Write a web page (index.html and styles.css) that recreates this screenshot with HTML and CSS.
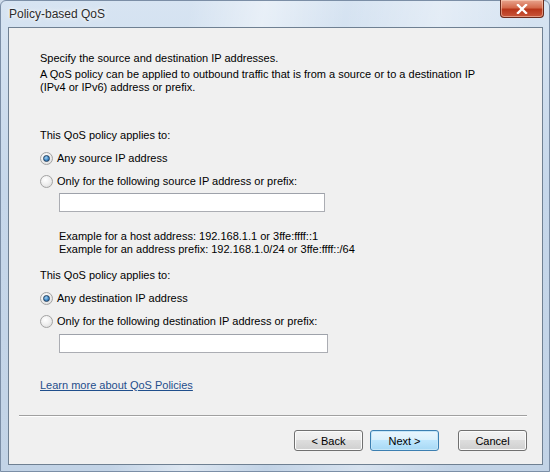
FILE: index.html
```html
<!DOCTYPE html>
<html>
<head>
<meta charset="utf-8">
<title>Policy-based QoS</title>
<link rel="stylesheet" href="styles.css">
</head>
<body>
<div class="window">
  <div class="titlebar">
    <span class="title">Policy-based QoS</span>
    <button class="close" aria-label="Close">
      <svg width="12" height="10" viewBox="0 0 12 10"><path d="M2 1 L10 9 M10 1 L2 9" stroke="#fff" stroke-width="2.4" stroke-linecap="square"/></svg>
    </button>
  </div>
  <div class="client">
    <div class="content">
      <p class="line">Specify the source and destination IP addresses.</p>
      <p class="line gap3">A QoS policy can be applied to outbound traffic that is from a source or to a destination IP<br>(IPv4 or IPv6) address or prefix.</p>

      <p class="line heading first">This QoS policy applies to:</p>
      <label class="radio checked r1"><span class="dot"></span>Any source IP address</label>
      <label class="radio r2"><span class="dot"></span>Only for the following source IP address or prefix:</label>
      <div class="textbox tb1"></div>

      <p class="line example">Example for a host address: 192.168.1.1 or 3ffe:ffff::1<br>Example for an address prefix: 192.168.1.0/24 or 3ffe:ffff::/64</p>

      <p class="line heading second">This QoS policy applies to:</p>
      <label class="radio checked r1"><span class="dot"></span>Any destination IP address</label>
      <label class="radio r2"><span class="dot"></span>Only for the following destination IP address or prefix:</label>
      <div class="textbox tb2"></div>

      <a class="link" href="#">Learn more about QoS Policies</a>
    </div>
    <div class="footer">
      <div class="separator"></div>
      <div class="buttons">
        <button class="btn">&lt; Back</button>
        <button class="btn default">Next &gt;</button>
        <button class="btn cancel">Cancel</button>
      </div>
    </div>
  </div>
</div>
</body>
</html>
```
FILE: styles.css
```css
* { box-sizing: border-box; }

html, body {
  margin: 0;
  padding: 0;
  width: 550px;
  height: 472px;
  overflow: hidden;
  background: #cfdceb;
}

.window {
  width: 550px;
  height: 472px;
  display: flex;
  flex-direction: column;
  padding: 0 6px 6px 7px;
  background:
    linear-gradient(100deg, rgba(255,255,255,0) 30%, rgba(255,255,255,0.45) 42%, rgba(255,255,255,0) 55%, rgba(255,255,255,0.35) 70%, rgba(255,255,255,0) 85%),
    linear-gradient(180deg, #d7e4f2 0%, #c6d7ea 40%, #c2d3e6 100%);
  border: 1px solid #7b8ea6;
  border-radius: 6px 6px 0 0;
  font-family: "Liberation Sans", Arial, sans-serif;
  font-size: 11px;
  color: #000;
}

.titlebar {
  height: 26px;
  display: flex;
  align-items: flex-start;
  justify-content: space-between;
  flex-shrink: 0;
}

.title {
  font-size: 12px;
  color: #2c2c2c;
  padding-top: 6px;
  padding-left: 1px;
  text-shadow: 0 0 6px #fff, 0 0 3px #fff;
}

.close {
  width: 44px;
  height: 18px;
  margin-top: -1px;
  margin-right: -1px;
  border: 1px solid #6a2a1c;
  border-top: none;
  border-radius: 0 0 4px 4px;
  background: linear-gradient(180deg, #e8a48e 0%, #d46a4c 45%, #b8361a 55%, #c9563a 100%);
  display: flex;
  align-items: center;
  justify-content: center;
  padding: 0;
  box-shadow: inset 0 0 0 1px rgba(255,220,200,0.5);
}

.client {
  flex: 1;
  background: #f0f0f0;
  border: 1px solid #6f8092;
  display: flex;
  flex-direction: column;
}

.content {
  flex: 1;
  padding: 24px 0 0 31px;
  display: flex;
  flex-direction: column;
  align-items: flex-start;
}

.line {
  margin: 0;
  line-height: 13px;
}

.gap3 { margin-top: 3px; }
.heading.first { margin-top: 35px; }
.heading.second { margin-top: 13px; }

.radio {
  display: flex;
  align-items: center;
  height: 16px;
  gap: 4px;
}
.radio.r1 { margin-top: 8px; }
.radio.r2 { margin-top: 7px; }

.dot {
  width: 13px;
  height: 13px;
  border-radius: 50%;
  border: 1px solid #a3a3a3;
  background: radial-gradient(circle at 40% 35%, #ffffff 0%, #f0f0f0 45%, #d6d6d6 100%);
  display: flex;
  align-items: center;
  justify-content: center;
}
.checked .dot::after {
  content: "";
  width: 7px;
  height: 7px;
  border-radius: 50%;
  background: radial-gradient(circle at 40% 35%, #a7d4f3 0%, #3d87c6 55%, #1d5a95 100%);
  border: 1px solid #233f5d;
  box-sizing: border-box;
}

.textbox {
  margin-left: 19px;
  height: 19px;
  border: 1px solid #abadb3;
  border-top-color: #9ea2aa;
  background: #fff;
}
.tb1 { width: 266px; margin-top: 4px; }
.tb2 { width: 269px; margin-top: 5px; }

.example {
  margin-left: 19px;
  margin-top: 18px;
}

.link {
  margin-top: 26px;
  color: #1f4e8c;
  text-decoration: underline;
  line-height: 13px;
}

.footer {
  flex-shrink: 0;
  padding: 0 15px 13px 10px;
}

.separator {
  height: 2px;
  border-top: 1px solid #a0a0a0;
  border-bottom: 1px solid #ffffff;
}

.buttons {
  display: flex;
  justify-content: flex-end;
  margin-top: 13px;
}

.btn {
  width: 69px;
  height: 21px;
  margin-left: 7px;
  font-family: inherit;
  font-size: 11px;
  color: #000;
  border: 1px solid #707070;
  border-radius: 3px;
  background: linear-gradient(180deg, #f2f2f2 0%, #ebebeb 49%, #dddddd 50%, #cfcfcf 100%);
  box-shadow: inset 0 0 0 1px #fbfbfb;
  padding: 0;
}
.btn.default {
  border-color: #3c7fb1;
  background: linear-gradient(180deg, #eaf6fd 0%, #d9f0fc 49%, #bee6fd 50%, #a7d9f5 100%);
  box-shadow: inset 0 0 0 1px #c5e6f8;
}
.btn.cancel { margin-left: 19px; }
```
